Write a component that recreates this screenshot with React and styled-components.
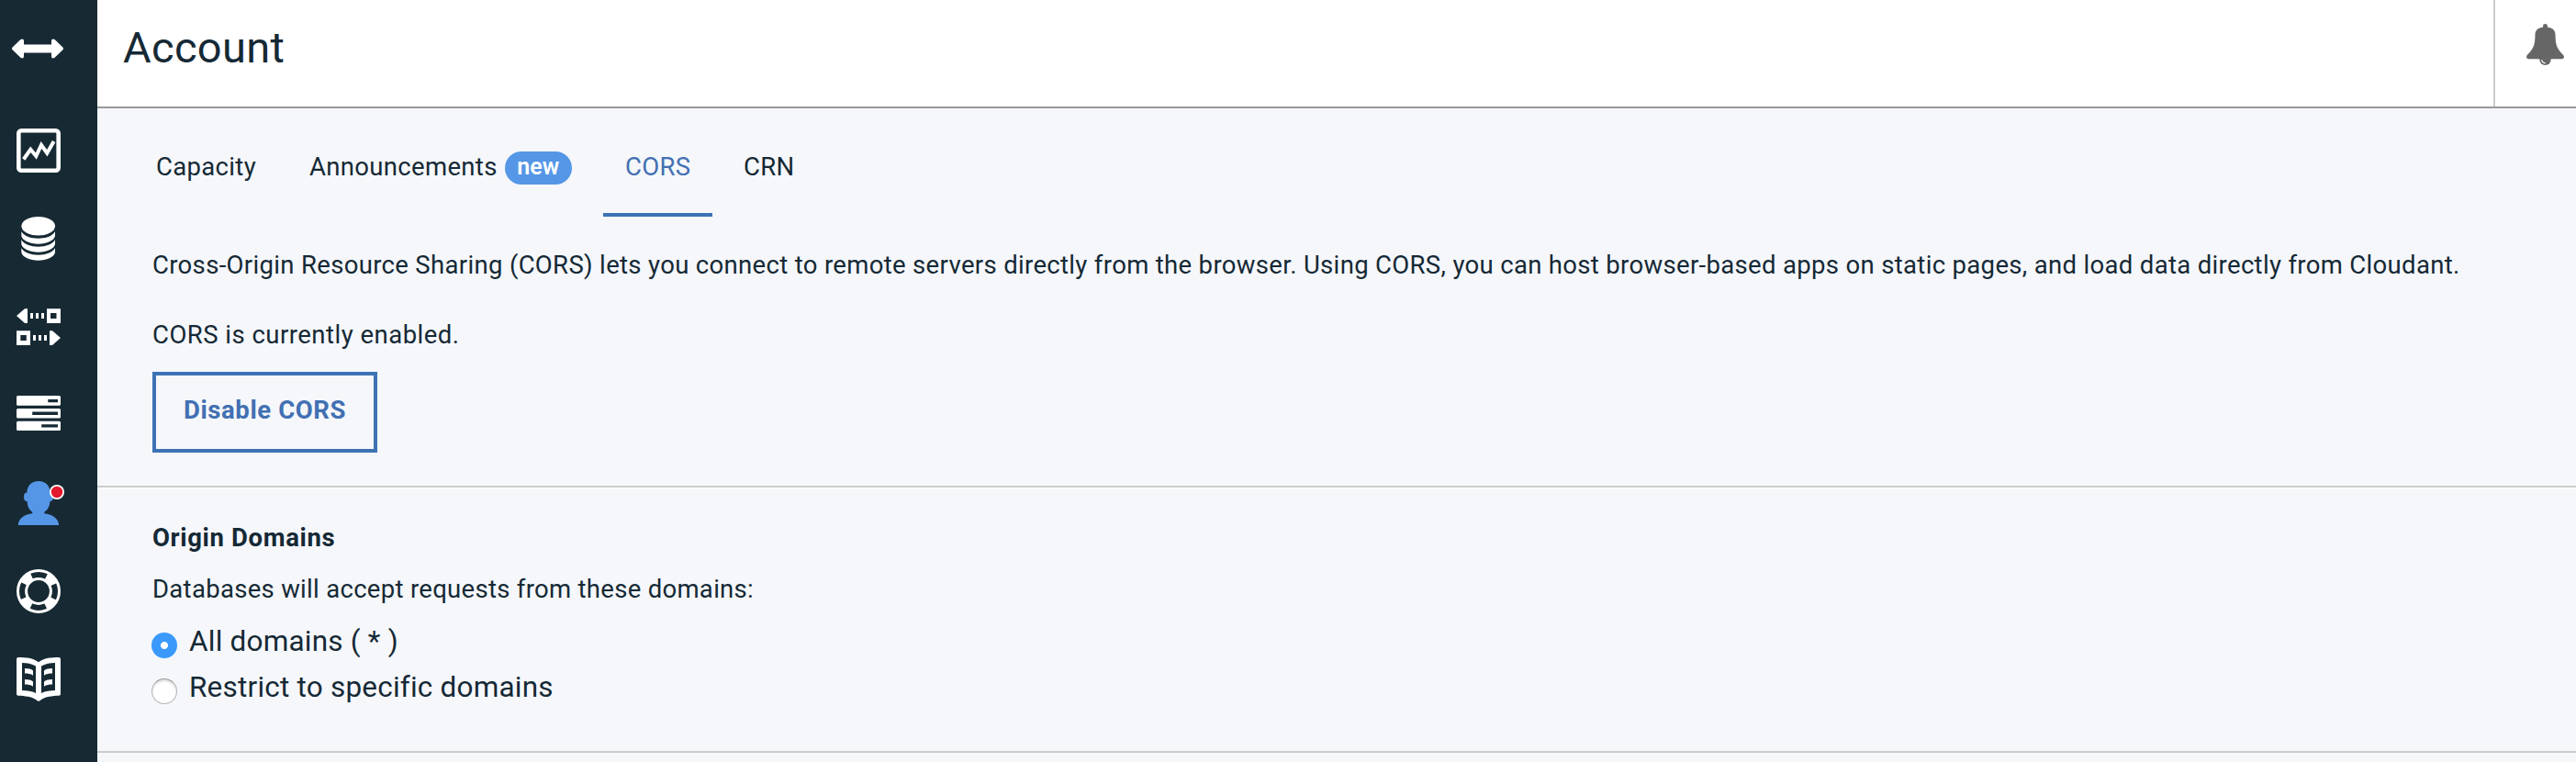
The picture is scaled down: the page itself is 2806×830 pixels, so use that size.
import React from "react";
import styled, { createGlobalStyle, css } from "styled-components";

const GlobalStyle = createGlobalStyle`
  * { box-sizing: border-box; }
  body {
    margin: 0;
    background: #f5f7fb;
    color: #152935;
    font-family: Roboto, "Liberation Sans", sans-serif;
    font-size: 27.5px;
    line-height: 36px;
    letter-spacing: 0.333px;
  }
  #root { overflow: hidden; }
`;

const Page = styled.div`
  display: flex;
  height: 830px;
  overflow: hidden;
`;

const Sidebar = styled.nav`
  flex: none;
  width: 106px;
  background: #172a34;
  display: flex;
  flex-direction: column;
`;

const Collapse = styled.button`
  display: flex;
  align-items: flex-start;
  height: 116px;
  padding: 42px 0 0 13px;
  border: 0;
  background: none;
`;

const NavItem = styled.a`
  display: flex;
  align-items: center;
  height: 96px;
  padding-left: 18px;
  color: ${(p) => (p.$active ? "#5596e6" : "#fff")};
  svg { display: block; overflow: visible; }
`;

const Main = styled.main`
  flex: 1;
  min-width: 0;
`;

const Header = styled.header`
  display: flex;
  justify-content: space-between;
  height: 118px;
  background: #fff;
  border-bottom: 2px solid #999;
`;

const Title = styled.h1`
  margin: 0;
  padding: 22px 0 0 28px;
  font-size: 47px;
  font-weight: 400;
  line-height: 60px;
`;

const Notifications = styled.button`
  display: flex;
  align-items: flex-start;
  width: 90px;
  padding: 26px 0 0 34px;
  border: 0;
  border-left: 2px solid #ccc;
  background: none;
`;

const Tabs = styled.div`
  display: flex;
  gap: 10px;
  height: 118px;
  padding: 47px 0 0 40px;
`;

const Tab = styled.a`
  display: flex;
  align-items: flex-start;
  width: ${(p) => p.$width}px;
  padding-left: 24px;
  line-height: 34px;
  white-space: nowrap;
  ${(p) =>
    p.$active &&
    css`
      color: #4270b2;
      border-bottom: 4px solid #3d72b4;
    `}
`;

const Badge = styled.span`
  margin-left: 8px;
  width: 73px;
  height: 36px;
  border-radius: 18px;
  background: #5596e6;
  color: #fff;
  font-size: 25px;
  font-weight: 600;
  line-height: 33px;
  letter-spacing: 0;
  text-align: center;
`;

const Section = styled.section`
  padding: ${(p) => p.$pad};
  border-bottom: 2px solid #ccc;
`;

const Gap = styled.div`
  height: 2px;
  background: #fff;
`;

const Text = styled.p`
  margin: 0 0 ${(p) => p.$after}px;
  white-space: nowrap;
  letter-spacing: ${(p) => p.$tracking || 0.33}px;
`;

const Heading = styled.h2`
  margin: 0 0 20px;
  font-size: 27.5px;
  font-weight: 700;
  line-height: 36px;
  letter-spacing: 0.64px;
`;

const Button = styled.button`
  display: block;
  width: 245px;
  height: 88px;
  padding: 0 0 5px;
  border: 4px solid #3d72b4;
  background: transparent;
  color: #4270b2;
  font: 700 27.5px/36px Roboto, "Liberation Sans", sans-serif;
  letter-spacing: 0.6px;
`;

const Option = styled.label`
  display: flex;
  align-items: flex-start;
  height: 50px;
  font-size: 31.5px;
  line-height: 50px;
  letter-spacing: 0.21px;
  white-space: nowrap;
`;

const Radio = styled.input`
  appearance: none;
  flex: none;
  width: 28px;
  height: 28px;
  margin: 15px 13px 0 -1px;
  border-radius: 50%;
  border: 1px solid #b4b4b6;
  border-top-color: #989898;
  background: #fff;
  box-shadow: inset 0 2px 2px rgba(0, 0, 0, 0.14);
  &:checked {
    border: 0;
    box-shadow: none;
    background: radial-gradient(circle, #fff 0 3.6px, #3b99fc 4.4px);
  }
`;

const ArrowsIcon = () => (
  <svg width="56" height="22" viewBox="0 0 56 22" fill="#fff">
    <path d="M.6 9.4 9.4 1Q12.8-.8 13 2.6V6.6H43V2.6Q43.2-.8 46.6 1L55.4 9.4Q56.6 10.9 55.4 12.3L46.6 20.8Q43.2 22.8 43 19.2V15.4H13V19.2Q12.8 22.8 9.4 20.8L.6 12.3Q-.6 10.9.6 9.4Z" />
  </svg>
);

const Icon = ({ children }) => (
  <svg width="48" height="48" viewBox="0 0 48 48" fill="currentColor">
    {children}
  </svg>
);

const ChartIcon = () => (
  <Icon>
    <rect x="2.3" y="2.3" width="43.4" height="43.4" rx="3" fill="none" stroke="currentColor" strokeWidth="4.6" />
    <path d="M7.7 33.5 15.3 22.8 21.3 30 27 18 33.3 26.7 40.6 14" fill="none" stroke="currentColor" strokeWidth="4" />
  </Icon>
);

const band = "M5.3 16.3C8.5 21.2 15 23.7 23.7 23.7S38.8 21.2 42 16.3V21C40.5 26.4 33 29.7 23.7 29.7S6.8 26.4 5.3 21Z";
const DatabaseIcon = () => (
  <Icon>
    <ellipse cx="23.7" cy="10.3" rx="18.3" ry="10.3" />
    <path d={band} />
    <path d={band} transform="translate(0 9)" />
    <path d={band} transform="translate(0 18)" />
  </Icon>
);

const ReplicationIcon = () => (
  <Icon>
    <g transform="translate(0 .3)" fillRule="evenodd">
      <path d="M0 11.7 9 4H12V19.6H9Z" />
      <path d="M15 8.8h3v6h-3zM21 8.8h3v6h-3zM27 8.8h3v6h-3z" />
      <path d="M33 4h15v15.6H33zM37 8.8v6h6.5v-6z" />
      <path d="M0 28h15v15.6H0zM4.3 32.8v6h6.5v-6z" />
      <path d="M18 32.8h3v6h-3zM24 32.8h3v6h-3zM30 32.8h3v6h-3z" />
      <path d="M48 35.7 39 28H36V43.6H39Z" />
    </g>
  </Icon>
);

const TasksIcon = () => (
  <Icon>
    <rect x="0" y="3" width="48" height="10.7" rx="1.5" />
    <rect x="0" y="17" width="48" height="10.5" rx="1.5" />
    <rect x="0" y="30.7" width="48" height="10.4" rx="1.5" />
    <g fill="#172a34">
      <path d="M34.3 7H45v3.3H34.3zM17.2 20.5H45v3.4H17.2zM27.2 34.2H45v3.4H27.2z" />
    </g>
  </Icon>
);

const UserIcon = () => (
  <Icon>
    <path d="M24 0C16.5 0 11.5 5 11.3 12.7 8.8 12.2 8 14.5 8 17 8 20 9 22.2 11.6 22.2 12 28 14 31.5 17.3 33.7V35.3C9.5 36.3 2.2 40 1.7 48H46.2C45.7 40 38 36.3 30.3 35.3V33.7C33.8 31.5 36 28 36.4 22.2 39 22.2 40 20 40 17 40 14.5 39 12.2 36.7 12.7 36.5 5 31.5 0 24 0Z" />
    <circle cx="44" cy="12" r="8" fill="#fff" />
    <circle cx="44" cy="12" r="6.2" fill="#e3172e" />
  </Icon>
);

const SupportIcon = () => (
  <Icon>
    <g fill="none" stroke="currentColor">
      <circle cx="24" cy="24" r="22.5" strokeWidth="3" />
      <circle cx="24" cy="24" r="13.4" strokeWidth="3" />
      <circle cx="24" cy="24" r="18" strokeWidth="8" strokeDasharray="11.9 16.374" strokeDashoffset="-8.19" />
    </g>
  </Icon>
);

const page = "M0 2Q0 0 2 0C10 0 18 .6 24 5.2V47.7Q22.6 47.5 21 46C16.5 43 9 42 2 41.8 Q0 41.6 0 40Z";
const cut = "M6 6C11.5 6 16.5 7 21 9.6V39C16.5 36.7 11.5 36 6 36Z";
const line = "M9 12C13 12 16 12.7 18 14.4V19.8C15.5 18 12.5 17.6 9 17.6Z";
const Leaf = () => (
  <>
    <path d={page} />
    <path d={cut} fill="#172a34" />
    <path d={line} />
    <path d={line} transform="translate(0 12)" />
  </>
);
const BookIcon = () => (
  <Icon>
    <Leaf />
    <g transform="translate(48 0) scale(-1 1)">
      <Leaf />
    </g>
    <path d="M23 6h2v41h-2z" />
  </Icon>
);

const BellIcon = () => (
  <svg width="41" height="45" viewBox="0 0 41 45" fill="#666">
    <path d="M18 3.8V2.4a2.5 2.4 0 0 1 5 0V3.8C28.5 4.2 31.3 7 31.5 11.5 31.7 22 32.5 26.5 40.2 34 41.6 35.6 41 38.2 38.8 38.2H2.2C0 38.2-.6 35.6.8 34 8.5 26.5 9.3 22 9.5 11.5 9.7 7 12.5 4.2 18 3.8Z" />
    <circle cx="20.5" cy="38.8" r="6.2" />
    <path d="M16.6 39.2C17 41.2 18.6 42.7 20.8 42.9" fill="none" stroke="#fff" strokeWidth="1.1" />
  </svg>
);

const NAV = [
  { id: "monitoring", icon: ChartIcon },
  { id: "databases", icon: DatabaseIcon },
  { id: "replication", icon: ReplicationIcon },
  { id: "tasks", icon: TasksIcon },
  { id: "account", icon: UserIcon, active: true },
  { id: "support", icon: SupportIcon },
  { id: "docs", icon: BookIcon },
];

export default function App() {
  return (
    <>
      <GlobalStyle />
      <Page>
        <Sidebar>
          <Collapse>
            <ArrowsIcon />
          </Collapse>
          {NAV.map(({ id, icon: Glyph, active }) => (
            <NavItem key={id} $active={active}>
              <Glyph />
            </NavItem>
          ))}
        </Sidebar>
        <Main>
          <Header>
            <Title>Account</Title>
            <Notifications>
              <BellIcon />
            </Notifications>
          </Header>
          <Tabs>
            <Tab $width={157}>Capacity</Tab>
            <Tab $width={334}>
              Announcements<Badge>new</Badge>
            </Tab>
            <Tab $width={119} $active>
              CORS
            </Tab>
            <Tab $width={100}>CRN</Tab>
          </Tabs>
          <Section $pad="35px 60px 36px">
            <Text $after={40}>
              Cross-Origin Resource Sharing (CORS) lets you connect to remote servers directly from the browser. Using
              CORS, you can host browser-based apps on static pages, and load data directly from Cloudant.
            </Text>
            <Text $after={22} $tracking={0.48}>
              CORS is currently enabled.
            </Text>
            <Button>Disable CORS</Button>
          </Section>
          <Gap />
          <Section $pad="35px 60px 44px">
            <Heading>Origin Domains</Heading>
            <Text $after={14} $tracking={0.3}>
              Databases will accept requests from these domains:
            </Text>
            <Option>
              <Radio type="radio" name="origin" defaultChecked />
              All domains ( * )
            </Option>
            <Option>
              <Radio type="radio" name="origin" />
              Restrict to specific domains
            </Option>
          </Section>
        </Main>
      </Page>
    </>
  );
}
